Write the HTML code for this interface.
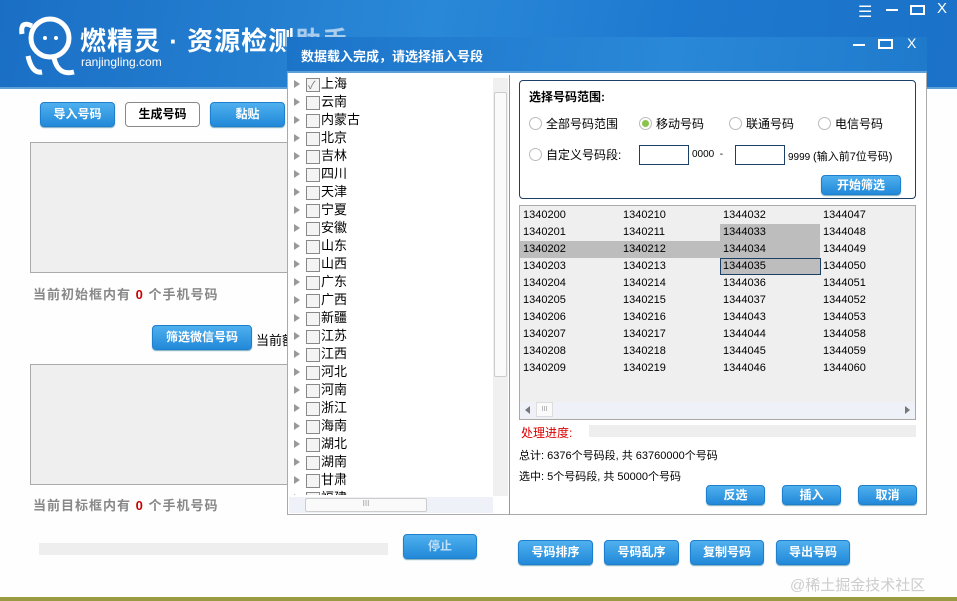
<!DOCTYPE html>
<html><head><meta charset="utf-8"><style>
*{margin:0;padding:0;box-sizing:border-box}
body{width:957px;height:601px;overflow:hidden;position:relative;background:#fefefe;font-family:"Liberation Sans","Noto Sans CJK SC",sans-serif;font-size:12px;color:#000}
.a{position:absolute}
.hdr{left:0;top:0;width:957px;height:89px;background:linear-gradient(100deg,#1a6fc4 0%,#2a88d8 45%,#1d79cf 70%,#1b72c8 100%);border-bottom:2px solid #5c9fd9}
.btn{position:absolute;background:linear-gradient(#4fb0ee,#2289d9);border:1px solid #1f7fcf;border-radius:4px;color:#fff;font-weight:bold;font-size:12px;text-align:center;box-shadow:0 1px 1px #7ab}
.box{position:absolute;background:#efefef;border:1px solid #aaa}
.gray{color:#888;font-weight:bold;font-size:13px;letter-spacing:1px}
.tree div{height:18px;line-height:18px;font-size:13px;position:relative;padding-left:32px}
.tree div:before{content:"";position:absolute;left:5px;top:5px;border-left:6px solid #999;border-top:4px solid transparent;border-bottom:4px solid transparent}
.tree div:after{content:"";position:absolute;left:17px;top:3px;width:12px;height:12px;border:1px solid #888;background:#f4f4f4}
.grid span{position:absolute;font-size:11px;height:17px;line-height:17px;padding-left:3px;width:100px}
.rad{display:inline-block;width:13px;height:13px;border:1px solid #bbb;border-radius:50%;background:#fff;vertical-align:-2px;margin-right:4px}
</style></head><body>
<div class="a hdr"></div>
<svg class="a" style="left:18px;top:12px" width="60" height="66" viewBox="0 0 60 66"><circle cx="32" cy="26" r="19" fill="none" stroke="#fff" stroke-width="5"/><path d="M14 14 Q2 8 4 22 M10 44 Q14 62 24 60 M36 46 Q40 64 56 60" stroke="#fff" stroke-width="5" fill="none"/><circle cx="27" cy="26" r="2" fill="#fff"/><circle cx="38" cy="26" r="2" fill="#fff"/></svg>
<div class="a" style="left:80px;top:26px;color:#fff;font-size:26px;font-weight:bold;letter-spacing:1px;line-height:30px">燃精灵 · 资源检测<span style="opacity:.6">助手</span></div>
<div class="a" style="left:81px;top:55px;color:#fff;font-size:12px">ranjingling.com</div>
<div class="a" style="left:858px;top:2px;color:#fff;font-size:16px">☰</div>
<div class="a" style="left:886px;top:9px;width:12px;height:2px;background:#fff"></div>
<div class="a" style="left:910px;top:5px;width:15px;height:10px;border:2px solid #fff"></div>
<div class="a" style="left:937px;top:0px;color:#fff;font-size:15px">X</div>

<div class="btn" style="left:40px;top:102px;width:75px;height:25px;line-height:23px">导入号码</div>
<div class="a" style="left:125px;top:102px;width:75px;height:25px;border:1px solid #888;border-radius:4px;background:#fff;font-weight:bold;text-align:center;line-height:23px">生成号码</div>
<div class="btn" style="left:210px;top:102px;width:75px;height:25px;line-height:23px">黏贴</div>
<div class="box" style="left:30px;top:142px;width:262px;height:131px"></div>
<div class="a gray" style="left:33px;top:284px">当前初始框内有 <span style="color:#c00">0</span> 个手机号码</div>
<div class="btn" style="left:152px;top:325px;width:100px;height:25px;line-height:23px">筛选微信号码</div>
<div class="a" style="left:256px;top:330px;font-size:13px">当前额</div>
<div class="box" style="left:30px;top:364px;width:262px;height:121px"></div>
<div class="a gray" style="left:33px;top:495px">当前目标框内有 <span style="color:#c00">0</span> 个手机号码</div>
<div class="a" style="left:39px;top:543px;width:349px;height:12px;background:#eee"></div>
<div class="btn" style="left:403px;top:534px;width:74px;height:25px;line-height:23px;color:#bfe0f8">停止</div>
<div class="btn" style="left:518px;top:540px;width:75px;height:25px;line-height:23px">号码排序</div>
<div class="btn" style="left:604px;top:540px;width:75px;height:25px;line-height:23px">号码乱序</div>
<div class="btn" style="left:690px;top:540px;width:74px;height:25px;line-height:23px">复制号码</div>
<div class="btn" style="left:776px;top:540px;width:74px;height:25px;line-height:23px">导出号码</div>
<div class="a" style="left:790px;top:574px;color:#ccc;font-size:15px">@稀土掘金技术社区</div>
<div class="a" style="left:0;top:597px;width:957px;height:4px;background:#9a9a40"></div>

<!-- dialog -->
<div class="a" style="left:287px;top:37px;width:640px;height:478px;background:#fff;border:1px solid #aaa;border-top:none"></div>
<div class="a" style="left:287px;top:37px;width:640px;height:36px;background:linear-gradient(100deg,#1c74c9,#2a88d8 60%,#1f7acc);border-bottom:2px solid #5c9fd9"></div>
<div class="a" style="left:301px;top:46px;color:#fff;font-weight:bold;font-size:13px">数据载入完成，请选择插入号段</div>
<div class="a" style="left:853px;top:44px;width:12px;height:2px;background:#fff"></div>
<div class="a" style="left:878px;top:39px;width:15px;height:10px;border:2px solid #fff"></div>
<div class="a" style="left:907px;top:35px;color:#fff;font-size:14px">X</div>
<div class="a tree" style="left:289px;top:75px;width:204px;height:420px;overflow:hidden">
<div>上海</div><div>云南</div><div>内蒙古</div><div>北京</div><div>吉林</div><div>四川</div><div>天津</div><div>宁夏</div><div>安徽</div><div>山东</div><div>山西</div><div>广东</div><div>广西</div><div>新疆</div><div>江苏</div><div>江西</div><div>河北</div><div>河南</div><div>浙江</div><div>海南</div><div>湖北</div><div>湖南</div><div>甘肃</div><div>福建</div></div>
<div class="a" style="left:308px;top:77px;font-size:11px;color:#777">✓</div>
<div class="a" style="left:493px;top:78px;width:15px;height:418px;background:#f0f0f0"></div>
<div class="a" style="left:494px;top:92px;width:13px;height:285px;background:#fafafa;border:1px solid #ccc;border-radius:2px"></div>
<div class="a" style="left:289px;top:497px;width:204px;height:16px;background:#eef2f8"></div>
<div class="a" style="left:305px;top:498px;width:122px;height:14px;background:#fafafa;border:1px solid #ccc;border-radius:2px;text-align:center;font-size:8px;color:#999">III</div>
<div class="a" style="left:509px;top:75px;width:1px;height:440px;background:#999"></div>

<div class="a" style="left:519px;top:80px;width:397px;height:119px;border:1px solid #1c3f66;border-radius:4px"></div>
<div class="a" style="left:529px;top:88px;font-weight:bold;font-size:12px">选择号码范围:</div>
<div class="a" style="left:529px;top:115px;font-size:12px"><span class="rad"></span>全部号码范围</div>
<div class="a" style="left:639px;top:115px;font-size:12px"><span class="rad" style="background:radial-gradient(#8bc34a 40%,#fff 50%)"></span>移动号码</div>
<div class="a" style="left:729px;top:115px;font-size:12px"><span class="rad"></span>联通号码</div>
<div class="a" style="left:818px;top:115px;font-size:12px"><span class="rad"></span>电信号码</div>
<div class="a" style="left:529px;top:146px;font-size:12px"><span class="rad"></span>自定义号码段:</div>
<div class="a" style="left:639px;top:145px;width:50px;height:20px;border:1px solid #1c3f66"></div>
<div class="a" style="left:692px;top:149px;font-size:10px">0000 &nbsp;-</div>
<div class="a" style="left:735px;top:145px;width:50px;height:20px;border:1px solid #1c3f66"></div>
<div class="a" style="left:788px;top:148px;font-size:10px">9999 <span style="font-size:11px">(输入前7位号码)</span></div>
<div class="btn" style="left:821px;top:175px;width:80px;height:20px;line-height:18px">开始筛选</div>

<div class="a" style="left:519px;top:205px;width:397px;height:215px;background:#efefef;border:1px solid #aaa"></div>
<div class="a" style="left:720px;top:224px;width:100px;height:34px;background:#bdbdbd"></div>
<div class="a" style="left:520px;top:241px;width:200px;height:17px;background:#bdbdbd"></div>
<div class="a" style="left:720px;top:258px;width:101px;height:17px;background:#bdbdbd;border:1px solid #1c3f66"></div>
<div class="a grid" style="left:520px;top:207px">
<span style="left:0;top:0">1340200</span><span style="left:100px;top:0">1340210</span><span style="left:200px;top:0">1344032</span><span style="left:300px;top:0">1344047</span>
<span style="left:0;top:17px">1340201</span><span style="left:100px;top:17px">1340211</span><span style="left:200px;top:17px">1344033</span><span style="left:300px;top:17px">1344048</span>
<span style="left:0;top:34px">1340202</span><span style="left:100px;top:34px">1340212</span><span style="left:200px;top:34px">1344034</span><span style="left:300px;top:34px">1344049</span>
<span style="left:0;top:51px">1340203</span><span style="left:100px;top:51px">1340213</span><span style="left:200px;top:51px">1344035</span><span style="left:300px;top:51px">1344050</span>
<span style="left:0;top:68px">1340204</span><span style="left:100px;top:68px">1340214</span><span style="left:200px;top:68px">1344036</span><span style="left:300px;top:68px">1344051</span>
<span style="left:0;top:85px">1340205</span><span style="left:100px;top:85px">1340215</span><span style="left:200px;top:85px">1344037</span><span style="left:300px;top:85px">1344052</span>
<span style="left:0;top:102px">1340206</span><span style="left:100px;top:102px">1340216</span><span style="left:200px;top:102px">1344043</span><span style="left:300px;top:102px">1344053</span>
<span style="left:0;top:119px">1340207</span><span style="left:100px;top:119px">1340217</span><span style="left:200px;top:119px">1344044</span><span style="left:300px;top:119px">1344058</span>
<span style="left:0;top:136px">1340208</span><span style="left:100px;top:136px">1340218</span><span style="left:200px;top:136px">1344045</span><span style="left:300px;top:136px">1344059</span>
<span style="left:0;top:153px">1340209</span><span style="left:100px;top:153px">1340219</span><span style="left:200px;top:153px">1344046</span><span style="left:300px;top:153px">1344060</span>
</div>
<div class="a" style="left:520px;top:402px;width:395px;height:16px;background:#eef2f8"></div>
<div class="a" style="left:536px;top:402px;width:17px;height:15px;background:#fafafa;border:1px solid #ddd;font-size:7px;color:#999;text-align:center;line-height:13px">III</div>
<div class="a" style="left:525px;top:406px;border-right:5px solid #777;border-top:4px solid transparent;border-bottom:4px solid transparent"></div>
<div class="a" style="left:905px;top:406px;border-left:5px solid #777;border-top:4px solid transparent;border-bottom:4px solid transparent"></div>
<div class="a" style="left:521px;top:424px;color:#d00;font-size:12px">处理进度:</div>
<div class="a" style="left:589px;top:425px;width:327px;height:12px;background:#eee"></div>
<div class="a" style="left:519px;top:447px;font-size:11px">总计: 6376个号码段, 共 63760000个号码</div>
<div class="a" style="left:519px;top:468px;font-size:11px">选中: 5个号码段, 共 50000个号码</div>
<div class="btn" style="left:706px;top:485px;width:59px;height:20px;line-height:18px">反选</div>
<div class="btn" style="left:782px;top:485px;width:59px;height:20px;line-height:18px">插入</div>
<div class="btn" style="left:858px;top:485px;width:59px;height:20px;line-height:18px">取消</div>
</body></html>
